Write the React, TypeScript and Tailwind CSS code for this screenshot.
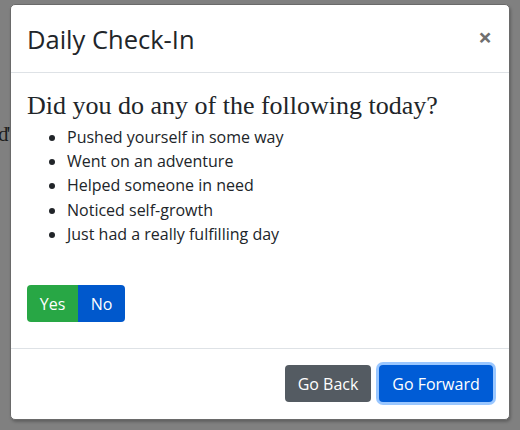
import React from "react";

export default function App() {
  const items = [
    "Pushed yourself in some way",
    "Went on an adventure",
    "Helped someone in need",
    "Noticed self-growth",
    "Just had a really fulfilling day",
  ];
  return (
    <div className="relative w-[520px] h-[430px] overflow-hidden bg-[#808080] pt-[4px] pl-[10px]" style={{ fontFamily: '"Open Sans", sans-serif' }}>
      <span className="absolute left-[-2px] top-[119px] text-[21px] tracking-[-2px] text-[#1c1c1c]" style={{ fontFamily: '"Liberation Serif", serif' }}>d'</span>
      <div className="relative w-[500px] h-[416px] bg-white rounded-[5px] border border-[#6a6a6a] flex flex-col shadow-[1px_2px_3px_rgba(0,0,0,0.25)]">
        <div className="flex items-center justify-between h-[68px] px-[16px] border-b border-[#dee2e6]">
          <h5 className="text-[25.5px] leading-[36px] text-[#212529] font-normal">Daily Check-In</h5>
          <span className="text-[24px] font-bold text-[#6f6f6f] leading-none mr-[1px] mt-[-4px]">×</span>
        </div>
        <div className="flex-1 px-[16px] pt-[16px] border-b border-[#dee2e6]">
          <h4 className="text-[26px] leading-[33px] text-[#212529]" style={{ fontFamily: '"Liberation Serif", serif' }}>Did you do any of the following today?</h4>
          <ul className="list-disc pl-[40px] text-[16px] leading-[24.2px] text-[#212529] mt-[3px]">
            {items.map((t) => (
              <li key={t}>{t}</li>
            ))}
          </ul>
          <div className="flex mt-[39px]">
            <button className="h-[37px] w-[51px] bg-[#28a745] text-white text-[16px] rounded-l-[4px]">Yes</button>
            <button className="h-[37px] w-[47px] bg-[#0058cc] text-white text-[16px] rounded-r-[4px]">No</button>
          </div>
        </div>
        <div className="flex justify-end items-start gap-[8px] h-[70px] px-[16px] pt-[16px]">
          <button className="h-[37px] w-[86px] bg-[#545b62] text-white text-[16px] rounded-[4px]">Go Back</button>
          <button className="h-[37px] w-[114px] bg-[#005cd6] text-white text-[16px] rounded-[4px] shadow-[0_0_0_3px_rgba(120,180,255,0.75)]">Go Forward</button>
        </div>
      </div>
    </div>
  );
}
